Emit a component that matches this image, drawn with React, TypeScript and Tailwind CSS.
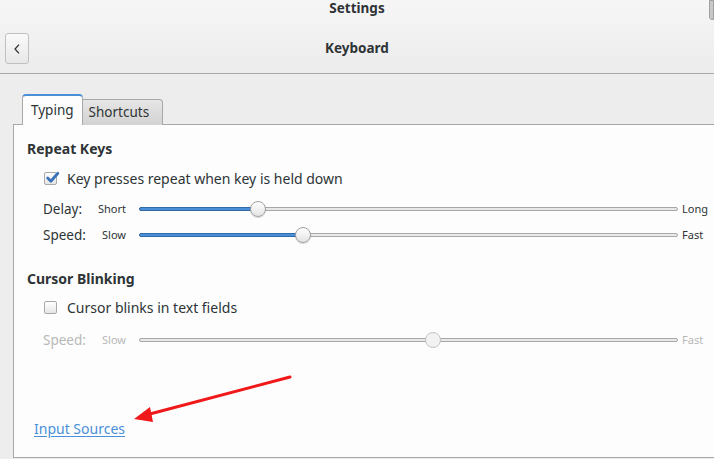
import React from "react";

const font = { fontFamily: '"Noto Sans", "Open Sans", sans-serif' };

function Slider({
  label,
  min,
  max,
  value,
  disabled = false,
}: {
  label: string;
  min: string;
  max: string;
  value: number;
  disabled?: boolean;
}) {
  const pct = `${value}%`;
  return (
    <div className="flex items-center h-[26px]">
      <span
        className={`w-[54px] pl-[16px] text-[13.5px] ${disabled ? "text-[#b8b8b8]" : "text-[#2e3436]"}`}
      >
        {label}
      </span>
      <span
        className={`w-[45px] text-right text-[11px] ${disabled ? "text-[#b8b8b8]" : "text-[#2e3436]"}`}
      >
        {min}
      </span>
      <div className="relative ml-[13px] w-[539px] h-[16px] flex items-center">
        <div className="w-full h-[4px] rounded-full border border-[#a8a8a8] bg-[#e8e8e8]" />
        {!disabled && (
          <div
            className="absolute left-0 h-[4px] rounded-full border border-[#336aa8] bg-[#4a90d9]"
            style={{ width: pct }}
          />
        )}
        <div
          className={`absolute w-[16px] h-[16px] -ml-[8px] rounded-full border ${disabled ? "border-[#c4c4c4] bg-[#f2f2f2]" : "border-[#a0a0a0] bg-gradient-to-b from-[#ffffff] to-[#e4e4e4] shadow-[0_1px_1px_rgba(0,0,0,0.15)]"}`}
          style={{ left: pct }}
        />
      </div>
      <span
        className={`ml-[4px] text-[11px] ${disabled ? "text-[#b8b8b8]" : "text-[#2e3436]"}`}
      >
        {max}
      </span>
    </div>
  );
}

function Check({ checked, text }: { checked: boolean; text: string }) {
  return (
    <div className="flex items-center h-[24px] pl-[17px]">
      <div className="relative w-[13px] h-[13px] rounded-[2px] border border-[#a8a8a8] bg-gradient-to-b from-[#ffffff] to-[#e6e6e6]">
        {checked && (
          <svg
            viewBox="0 0 14 14"
            className="absolute -top-[3px] left-[0px] w-[15px] h-[15px]"
          >
            <path
              d="M2.5 7.5 L5.5 10.5 L12 3"
              fill="none"
              stroke="#3a73b8"
              strokeWidth="2.6"
              strokeLinecap="round"
              strokeLinejoin="round"
            />
          </svg>
        )}
      </div>
      <span className="ml-[10px] text-[14px] text-[#2e3436]">{text}</span>
    </div>
  );
}

export default function App() {
  return (
    <div
      className="relative w-[714px] h-[459px] overflow-hidden bg-[#ededed] flex flex-col"
      style={font}
    >
      {/* header bar */}
      <div className="relative h-[74px] shrink-0 bg-gradient-to-b from-[#f6f6f6] to-[#ececec] border-b border-[#a9a9a9] flex flex-col">
        <div className="h-[16px] flex items-center justify-center text-[13.5px] font-bold text-[#2e3436]">
          Settings
        </div>
        <div className="flex items-center h-[49px] pl-[5px] mt-[16px] -translate-y-[4px]">
          <button className="w-[24px] h-[31px] rounded-[3px] border border-[#c0c0c0] bg-gradient-to-b from-[#fafafa] to-[#e8e8e8] flex items-center justify-center">
            <svg viewBox="0 0 10 14" className="w-[8px] h-[12px]">
              <path
                d="M7.5 1.5 L2.5 7 L7.5 12.5"
                fill="none"
                stroke="#2e3436"
                strokeWidth="1.6"
              />
            </svg>
          </button>
          <div className="flex-1 text-center pr-[29px] text-[13.5px] font-bold text-[#2e3436]">
            Keyboard
          </div>
        </div>
        <div className="absolute right-0 top-0 w-[5px] h-[20px] rounded-bl-[3px] bg-[#c8c8c8] border border-[#a0a0a0]" />
      </div>

      {/* notebook */}
      <div className="pl-[13px] pt-[20px] flex-1 flex flex-col">
        <div className="flex items-end h-[31px] pl-[9px] -mb-px relative z-10">
          <div className="h-[31px] px-[8px] rounded-t-[4px] border border-b-0 border-[#a8a8a8] border-t-2 border-t-[#4a90d9] bg-[#fdfdfd] flex items-center text-[13.5px] text-[#2e3436]">
            Typing
          </div>
          <div className="h-[26px] pl-[6px] pr-[13px] rounded-tr-[4px] border border-l-0 border-b-0 border-[#a8a8a8] bg-gradient-to-b from-[#e6e6e6] to-[#d2d2d2] flex items-center text-[13.5px] text-[#2e3436]">
            Shortcuts
          </div>
        </div>
        <div className="flex-1 mb-[1px] -mr-[4px] border border-[#a8a8a8] bg-[#fdfdfd] flex flex-col pt-[14px] pl-[13px]">
          <div className="h-[18px] flex items-center text-[14px] font-bold text-[#2e3436]">
            Repeat Keys
          </div>
          <div className="mt-[9px]">
            <Check checked text="Key presses repeat when key is held down" />
          </div>
          <div className="mt-[6px]">
            <Slider label="Delay:" min="Short" max="Long" value={22} />
          </div>
          <Slider label="Speed:" min="Slow" max="Fast" value={30.5} />
          <div className="mt-[21px] h-[18px] flex items-center text-[14px] font-bold text-[#2e3436]">
            Cursor Blinking
          </div>
          <div className="mt-[8px]">
            <Check checked={false} text="Cursor blinks in text fields" />
          </div>
          <div className="mt-[8px]">
            <Slider label="Speed:" min="Slow" max="Fast" value={54.5} disabled />
          </div>
          <div className="mt-[63px] pl-[7px]">
            <a className="text-[14px] text-[#4a90d9] underline underline-offset-2">
              Input Sources
            </a>
          </div>
        </div>
      </div>

      {/* annotation arrow */}
      <svg
        className="absolute left-0 top-0 pointer-events-none"
        width="714"
        height="459"
      >
        <line
          x1="290"
          y1="377"
          x2="146"
          y2="415"
          stroke="#f01818"
          strokeWidth="3"
          strokeLinecap="round"
        />
        <polygon points="134,419 150,407 153,422" fill="#f01818" />
      </svg>
    </div>
  );
}
